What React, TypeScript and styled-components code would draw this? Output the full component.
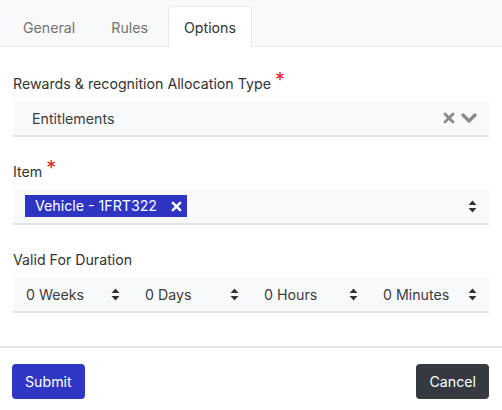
import React from "react";
import styled, { createGlobalStyle } from "styled-components";

const Global = createGlobalStyle`
  html, body { margin: 0; padding: 0; background: #fff; }
  body { font-family: Inter, "Noto Sans", sans-serif; font-size: 14px; color: #3a3a3a; }
  * { box-sizing: border-box; }
`;

const Page = styled.div`
  width: 502px;
  height: 410px;
  display: flex;
  flex-direction: column;
`;

const TabBar = styled.div`
  height: 47px;
  background: #f8f9fb;
  border-bottom: 1px solid #e6e8ec;
  display: flex;
  align-items: flex-end;
  padding-left: 7px;
  gap: 4px;
`;

const Tab = styled.div<{ $active?: boolean }>`
  padding: 0 15px;
  display: flex;
  align-items: center;
  font-size: 14.2px;
  color: ${(p) => (p.$active ? "#333" : "#737373")};
  background: ${(p) => (p.$active ? "#fff" : "transparent")};
  border: 1px solid ${(p) => (p.$active ? "#e6e8ec" : "transparent")};
  border-bottom: none;
  border-radius: 4px 4px 0 0;
  margin-bottom: -1px;
  height: 41px;
`;

const Body = styled.div`
  padding: 27px 13px 0;
  display: flex;
  flex-direction: column;
  gap: 25px;
`;

const Field = styled.div`
  display: flex;
  flex-direction: column;
  gap: 7px;
`;

const Label = styled.div`
  line-height: 20px;
  font-size: 14.2px;
  color: #333;
`;

const Req = styled.span`
  color: #e5202e;
  margin-left: 4px;
  font-size: 20px;
  line-height: 10px;
  position: relative;
  top: -2px;
`;

const SelectBox = styled.div`
  height: 36px;
  background: #f8f9fb;
  border-bottom: 2px solid #e2e4e9;
  display: flex;
  align-items: center;
  padding: 0 12px 0 19px;
  color: #3d3d3d;
  font-size: 14.2px;
`;

const ItemBox = styled(SelectBox)`
  padding-left: 12px;
`;

const Value = styled.div`
  flex: 1;
`;

const Icons = styled.div`
  display: flex;
  align-items: center;
  gap: 6px;
  color: #8a8a8a;
`;

const Chip = styled.div`
  height: 22px;
  background: #2e35c2;
  color: #fff;
  display: flex;
  align-items: center;
  padding: 0 5px 0 10px;
  gap: 14px;
`;

const ChipText = styled.span`
  line-height: 22px;
`;

const Spacer = styled.div`
  flex: 1;
`;

const DurationRow = styled.div`
  height: 36px;
  background: #f8f9fb;
  border-bottom: 2px solid #e2e4e9;
  display: grid;
  grid-template-columns: repeat(4, 1fr);
  font-size: 14.2px;
`;

const Segment = styled.div`
  display: flex;
  align-items: center;
  padding: 0 12px 0 13px;
  color: #3d3d3d;
`;

const Divider = styled.div`
  margin-top: 33px;
  height: 2px;
  background: #e6e8ec;
`;

const Footer = styled.div`
  display: flex;
  justify-content: space-between;
  padding: 16px 13px 0 12px;
`;

const Button = styled.button<{ $variant: "primary" | "dark" }>`
  height: 35px;
  padding: 0 13px;
  border: none;
  border-radius: 4px;
  font-family: Inter, "Noto Sans", sans-serif;
  font-size: 14.2px;
  color: #fff;
  background: ${(p) => (p.$variant === "primary" ? "#2f36c4" : "#343a40")};
`;

const Times = ({ size = 12, color = "currentColor" }: { size?: number; color?: string }) => (
  <svg width={size} height={size} viewBox="0 0 12 12">
    <path d="M2 2 L10 10 M10 2 L2 10" stroke={color} strokeWidth="2.8" strokeLinecap="round" />
  </svg>
);

const Chevron = () => (
  <svg width="16" height="12" viewBox="0 0 16 12">
    <path d="M2 3 L8 9 L14 3" stroke="currentColor" strokeWidth="3.2" fill="none" strokeLinecap="round" strokeLinejoin="round" />
  </svg>
);

const Sort = () => (
  <svg width="9" height="13" viewBox="0 0 9 13">
    <path d="M4.5 0.5 L8.5 5 H0.5 Z M4.5 12.5 L8.5 8 H0.5 Z" fill="#333" />
  </svg>
);

const units = ["0 Weeks", "0 Days", "0 Hours", "0 Minutes"];

export default function App() {
  return (
    <Page>
      <Global />
      <TabBar>
        <Tab>General</Tab>
        <Tab>Rules</Tab>
        <Tab $active>Options</Tab>
      </TabBar>
      <Body>
        <Field>
          <Label>
            Rewards &amp; recognition Allocation Type<Req>*</Req>
          </Label>
          <SelectBox>
            <Value>Entitlements</Value>
            <Icons>
              <Times size={12} />
              <Chevron />
            </Icons>
          </SelectBox>
        </Field>
        <Field>
          <Label>
            Item<Req>*</Req>
          </Label>
          <ItemBox>
            <Chip>
              <ChipText>Vehicle - 1FRT322</ChipText>
              <Times size={11} color="#fff" />
            </Chip>
            <Spacer />
            <Sort />
          </ItemBox>
        </Field>
        <Field>
          <Label>Valid For Duration</Label>
          <DurationRow>
            {units.map((u) => (
              <Segment key={u}>
                <Value>{u}</Value>
                <Sort />
              </Segment>
            ))}
          </DurationRow>
        </Field>
      </Body>
      <Divider />
      <Footer>
        <Button $variant="primary">Submit</Button>
        <Button $variant="dark">Cancel</Button>
      </Footer>
    </Page>
  );
}
